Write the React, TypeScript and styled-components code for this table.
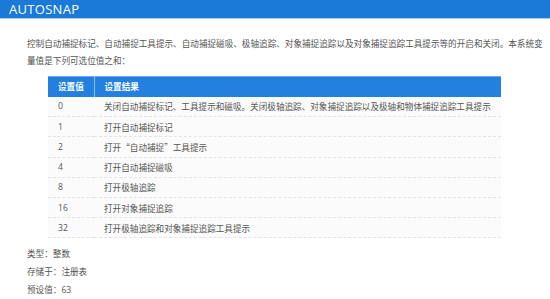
import * as React from 'react'
import styled, { createGlobalStyle } from 'styled-components'

const GlobalStyle = createGlobalStyle`
  html, body {
    margin: 0;
    padding: 0;
    background: #ffffff;
  }
  body {
    font-family: "Open Sans", "Noto Sans CJK SC", sans-serif;
    width: 550px;
    height: 299px;
    overflow: hidden;
  }
`

const Page = styled.div`
  display: flex;
  flex-direction: column;
  width: 550px;
`

const TitleBar = styled.div`
  height: 18px;
  line-height: 18px;
  background: #1b79d7;
  border-bottom: 1px solid #a9cdf1;
  color: #ffffff;
  font-size: 13px;
  padding-left: 9px;
  letter-spacing: 0.3px;
`

const Body = styled.div`
  display: flex;
  flex-direction: column;
  padding: 0 4px 0 27px;
`

const Intro = styled.p`
  margin: 17px 0 0;
  font-size: 8.6px;
  line-height: 17px;
  color: #555555;
`

const Table = styled.table`
  margin: 6px 0 0 21px;
  width: 453px;
  border-collapse: collapse;
  font-size: 8.6px;
  color: #555555;
`

const HeadCell = styled.th<{ $w?: number }>`
  width: ${p => (p.$w ? `${p.$w}px` : 'auto')};
  height: 20px;
  padding: 0 0 0 10px;
  background: #2380de;
  border-top: 1px solid #6aaaf0;
  border-right: 1px solid #8ebdf0;
  color: #ffffff;
  font-weight: bold;
  text-align: left;
  box-sizing: border-box;
  &:last-child { border-right: none; }
`

const Row = styled.tr`
  background: #fbfbfb;
  border-bottom: 1px dashed #e4e4e4;
`

const Cell = styled.td<{ $cjk?: boolean }>`
  height: 20.2px;
  padding: 0 0 0 10px;
  box-sizing: border-box;
  white-space: nowrap;
  font-family: ${p => (p.$cjk ? '"Noto Sans CJK SC", sans-serif' : 'inherit')};
`

const Meta = styled.div`
  display: flex;
  flex-direction: column;
  gap: 1px;
  margin-top: 8px;
  font-size: 8.6px;
  line-height: 17px;
  color: #555555;
`

const rows: [string, string][] = [
  ['0', '关闭自动捕捉标记、工具提示和磁吸。关闭极轴追踪、对象捕捉追踪以及极轴和物体捕捉追踪工具提示'],
  ['1', '打开自动捕捉标记'],
  ['2', '打开“自动捕捉”工具提示'],
  ['4', '打开自动捕捉磁吸'],
  ['8', '打开极轴追踪'],
  ['16', '打开对象捕捉追踪'],
  ['32', '打开极轴追踪和对象捕捉追踪工具提示'],
]

export default function App() {
  return (
    <Page>
      <GlobalStyle />
      <TitleBar>AUTOSNAP</TitleBar>
      <Body>
        <Intro>
          控制自动捕捉标记、自动捕捉工具提示、自动捕捉磁吸、极轴追踪、对象捕捉追踪以及对象捕捉追踪工具提示等的开启和关闭。本系统变量值是下列可选位值之和：
        </Intro>
        <Table>
          <thead>
            <tr>
              <HeadCell $w={46}>设置值</HeadCell>
              <HeadCell>设置结果</HeadCell>
            </tr>
          </thead>
          <tbody>
            {rows.map(([v, r]) => (
              <Row key={v}>
                <Cell>{v}</Cell>
                <Cell $cjk>{r}</Cell>
              </Row>
            ))}
          </tbody>
        </Table>
        <Meta>
          <div>类型：整数</div>
          <div>存储于：注册表</div>
          <div>预设值：63</div>
        </Meta>
      </Body>
    </Page>
  )
}
